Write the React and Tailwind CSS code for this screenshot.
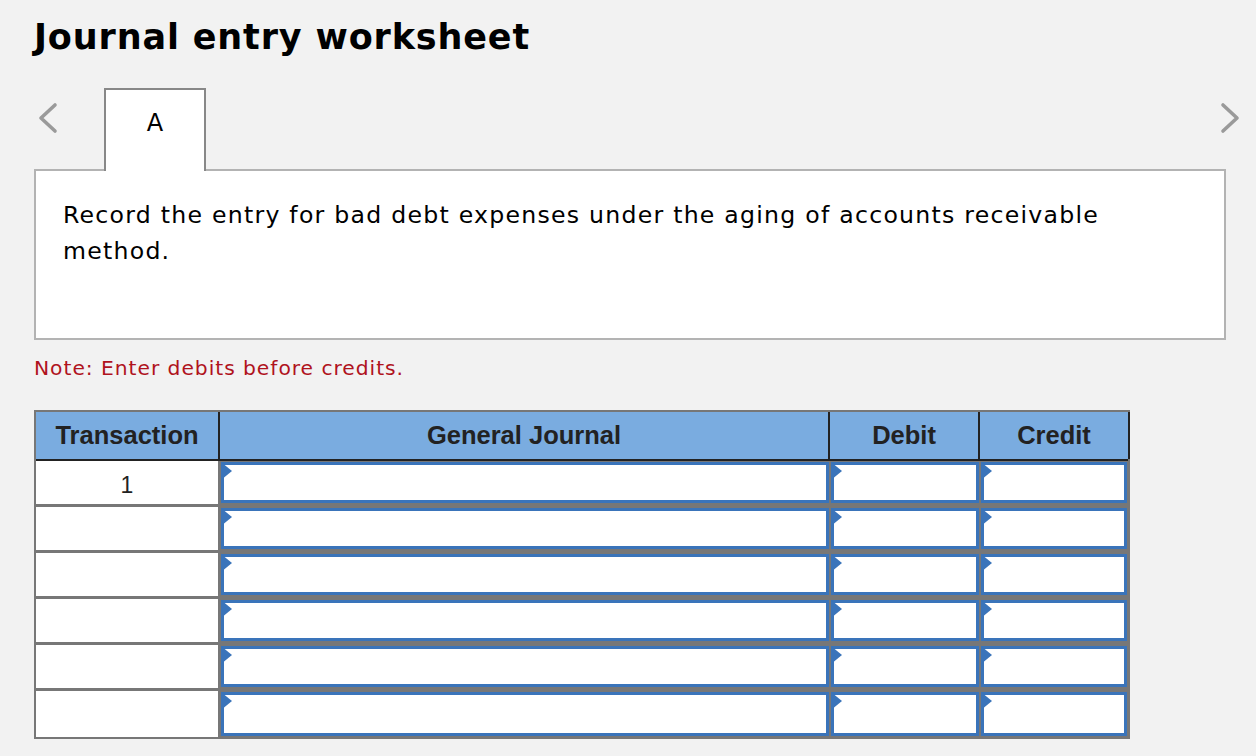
const rows = [1, 2, 3, 4, 5, 6];

function Chevron({ dir }) {
    return (
        <svg width="24" height="34" viewBox="0 0 24 34" className="text-[#9a9a9a]">
            <polyline
                points={dir === 'left' ? '19,4 5,17 19,30' : '5,4 19,17 5,30'}
                fill="none"
                stroke="currentColor"
                strokeWidth="3.6"
                strokeLinecap="round"
                strokeLinejoin="round"
            />
        </svg>
    );
}

function EntryInput() {
    return (
        <div className="relative h-full p-px">
            <div className="relative h-full bg-white border-[3px] border-[#3a74ba]">
                {/* little blue marker in the corner */}
                <span className="absolute -left-[3px] -top-[3px] w-0 h-0 border-t-[9px] border-b-[9px] border-l-[11px] border-t-transparent border-b-transparent border-l-[#3a74ba]" />
            </div>
        </div>
    );
}

export default function App() {
    return (
        <div className="w-[1256px] h-[756px] bg-[#f2f2f2] overflow-hidden font-['DejaVu_Sans',sans-serif] text-black">
            {/* Title */}
            <h1 className="pl-[34px] pt-[13px] text-[35px] leading-[48px] font-bold tracking-[0.85px]">
                Journal entry worksheet
            </h1>

            {/* Tabs row */}
            <div className="relative mt-[27px] h-[81px]">
                <div className="absolute left-[36px] top-[13px]">
                    <Chevron dir="left" />
                </div>
                <div className="absolute right-[14px] top-[13px]">
                    <Chevron dir="right" />
                </div>
                <div className="absolute left-[104px] top-0 w-[102px] h-[83px] bg-white border-2 border-b-0 border-[#888] z-10 flex justify-center pt-[18px] text-[24px] leading-[30px]">
                    A
                </div>
            </div>

            {/* Instruction box */}
            <div className="mx-[34px] w-[1192px] h-[171px] bg-white border-2 border-[#b3b3b3] pl-[27px] pt-[26px] pr-[40px]">
                <p className="text-[23.6px] leading-[36px] tracking-[1.25px]">
                    Record the entry for bad debt expenses under the aging of accounts receivable method.
                </p>
            </div>

            <p className="pl-[34px] mt-[14px] text-[20.3px] leading-[28px] tracking-[0.95px] text-[#b0131d]">
                Note: Enter debits before credits.
            </p>

            {/* Journal table */}
            <div className="ml-[34px] mt-[28px] w-[1096px] border-2 border-[#777] font-['Liberation_Sans',Arial,sans-serif]">
                <div className="grid grid-cols-[184px_610px_150px_148px] h-[49px] bg-[#7aace0] border-b-2 border-[#222] text-[#222] text-[25.5px] font-bold">
                    <div className="flex items-center justify-center border-r-2 border-[#222]">Transaction</div>
                    <div className="flex items-center justify-center border-r-2 border-[#222]">General Journal</div>
                    <div className="flex items-center justify-center border-r-2 border-[#222]">Debit</div>
                    <div className="flex items-center justify-center border-r-2 border-[#222] -mr-[2px]">Credit</div>
                </div>
                {rows.map((r, i) => (
                    <div
                        key={r}
                        className={`grid grid-cols-[184px_610px_150px_148px] h-[46px] ${i < rows.length - 1 ? 'border-b-[3px]' : ''} border-[#777] bg-[#777]`}
                    >
                        <div className="bg-white border-r-2 border-[#777] flex items-start justify-center pt-[7px] text-[23px] text-[#222]">
                            {i === 0 ? '1' : ''}
                        </div>
                        <EntryInput />
                        <EntryInput />
                        <EntryInput />
                    </div>
                ))}
            </div>
        </div>
    );
}
